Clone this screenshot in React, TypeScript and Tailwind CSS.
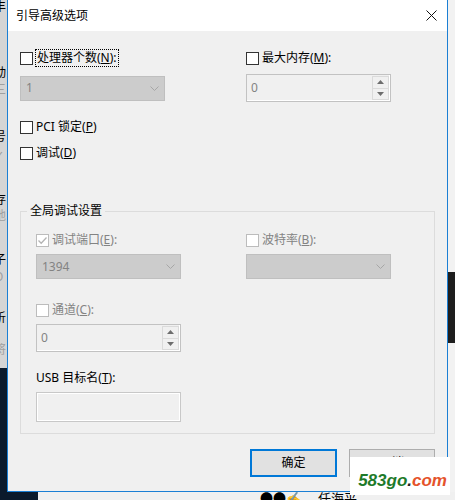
import React from "react";

const font = "font-['Noto_Sans','Noto_Sans_CJK_SC',sans-serif]";

function Box({ checked, disabled }: { checked?: boolean; disabled?: boolean }) {
  return (
    <span
      className={
        disabled
          ? "w-[13px] h-[13px] shrink-0 border border-[#bcbcbc] bg-white flex items-center justify-center"
          : "w-[13px] h-[13px] shrink-0 border border-[#333333] bg-white flex items-center justify-center"
      }
    >
      {checked && (
        <svg width="11" height="11" viewBox="0 0 11 11">
          <path d="M1.5 5.5 L4.2 8.3 L9.5 2.5" fill="none" stroke="#b4b4b4" strokeWidth="1.3" />
        </svg>
      )}
    </span>
  );
}

function Chevron() {
  return (
    <svg width="9" height="5" viewBox="0 0 9 5">
      <path d="M0.5 0.5 L4.5 4.5 L8.5 0.5" fill="none" stroke="#a6a6a6" strokeWidth="1" />
    </svg>
  );
}

function Combo({ value }: { value?: string }) {
  return (
    <div className="w-[145px] h-[25px] border border-[#bfbfbf] bg-[#cccccc] flex items-center justify-between pl-[5px] pr-[5px] text-[12px] text-[#838383]">
      <span>{value}</span>
      <Chevron />
    </div>
  );
}

function Spin({ value }: { value: string }) {
  return (
    <div className="w-[145px] h-[28px] border border-[#c2c2c2] bg-[#f0f0f0] flex shadow-[inset_-1px_-1px_0_#ffffff]">
      <div className="flex-1 flex items-center pl-[4px] text-[12px] text-[#838383]">{value}</div>
      <div className="w-[17px] my-[1px] mr-[1px] flex flex-col">
        <div className="flex-1 border border-[#dadada] flex items-center justify-center">
          <svg width="7" height="4" viewBox="0 0 7 4">
            <path d="M0 4 L3.5 0 L7 4 Z" fill="#6d6d6d" />
          </svg>
        </div>
        <div className="flex-1 border border-t-0 border-[#dadada] flex items-center justify-center">
          <svg width="7" height="4" viewBox="0 0 7 4">
            <path d="M0 0 L3.5 4 L7 0 Z" fill="#6d6d6d" />
          </svg>
        </div>
      </div>
    </div>
  );
}

function Check({
  children,
  checked,
  disabled,
  focus,
}: {
  children: React.ReactNode;
  checked?: boolean;
  disabled?: boolean;
  focus?: boolean;
}) {
  return (
    <div className="h-[18px] flex items-center">
      <Box checked={checked} disabled={disabled} />
      {focus ? (
        <span className="ml-[2px] px-[1px] h-[18px] leading-[16px] border border-dotted border-black text-[12px] text-black">
          {children}
        </span>
      ) : (
        <span className={disabled ? "ml-[3px] text-[12px] text-[#838383]" : "ml-[3px] text-[12px] text-black"}>
          {children}
        </span>
      )}
    </div>
  );
}

export default function App() {
  return (
    <div className={`w-[455px] h-[500px] overflow-hidden flex flex-col bg-[#f0f0f0] ${font}`}>
      <div className="h-[492px] flex">
        {/* window behind, left edge */}
        <div className="w-[7px] flex flex-col overflow-hidden bg-[#d5d5d5] text-[12px] leading-[12px]">
          <span className="-ml-[6px] mt-[1px] text-black">丰</span>
          <span className="-ml-[6px] mt-[54px] text-black">动</span>
          <span className="-ml-[6px] mt-[5px] text-[#a0a0a0]">三</span>
          <span className="-ml-[6px] mt-[35px] text-black">号</span>
          <span className="-ml-[6px] mt-[8px] text-[#a0a0a0]">✓</span>
          <span className="-ml-[6px] mt-[31px] text-black">存</span>
          <span className="-ml-[6px] mt-[4px] text-[#a0a0a0]">地</span>
          <span className="-ml-[6px] mt-[32px] text-black">子</span>
          <span className="-ml-[6px] mt-[5px] text-[#a0a0a0]">O</span>
          <span className="-ml-[6px] mt-[29px] text-black">析</span>
          <span className="-ml-[6px] mt-[20px] text-[#a0a0a0]">将</span>
          <div className="mt-[12px] flex-1 bg-[#0b1a2c]" />
        </div>

        {/* dialog */}
        <div className="w-[441px] flex flex-col border-x border-b border-[#1b7fd4]">
          <div className="h-[31px] bg-white flex items-center justify-between pl-[8px] pr-[10px]">
            <span className="text-[12px] text-black">引导高级选项</span>
            <svg width="11" height="11" viewBox="0 0 11 11">
              <path d="M0.5 0.5 L10.5 10.5 M10.5 0.5 L0.5 10.5" stroke="#111111" strokeWidth="1" />
            </svg>
          </div>

          <div className="flex-1 bg-[#f0f0f0] pl-[12px] pr-[12px] flex flex-col">
            <div className="mt-[18px] flex">
              <div className="w-[226px]">
                <Check focus>
                  处理器个数(<u>N</u>):
                </Check>
              </div>
              <Check>
                最大内存(<u>M</u>):
              </Check>
            </div>

            <div className="mt-[7px] flex items-center">
              <div className="w-[226px]">
                <Combo value="1" />
              </div>
              <Spin value="0" />
            </div>

            <div className="mt-[16px]">
              <Check>
                PCI 锁定(<u>P</u>)
              </Check>
            </div>
            <div className="mt-[8px]">
              <Check>
                调试(<u>D</u>)
              </Check>
            </div>

            <fieldset className="mt-[40px] w-[415px] border border-[#dcdcdc] pl-[15px] pb-[11px]">
              <legend className="-ml-[9px] px-[3px] h-[18px] leading-[18px] text-[12px] text-black">全局调试设置</legend>
              <div className="mt-[11px] flex">
                <div className="w-[210px]">
                  <Check checked disabled>
                    调试端口(<u>E</u>):
                  </Check>
                </div>
                <Check disabled>
                  波特率(<u>B</u>):
                </Check>
              </div>
              <div className="mt-[5px] flex">
                <div className="w-[210px]">
                  <Combo value="1394" />
                </div>
                <Combo />
              </div>
              <div className="mt-[22px]">
                <Check disabled>
                  通道(<u>C</u>):
                </Check>
              </div>
              <div className="mt-[5px]">
                <Spin value="0" />
              </div>
              <div className="mt-[17px] h-[18px] flex items-center text-[12px] text-black">
                USB 目标名(<u>T</u>):
              </div>
              <div className="mt-[5px] w-[145px] h-[30px] border border-[#c8c8c8] bg-[#f0f0f0] shadow-[inset_0_0_0_1px_#ffffff]" />
            </fieldset>

            <div className="mt-[15px] flex justify-end gap-[12px]">
              <button className="w-[87px] h-[28px] border-2 border-[#0078d7] bg-[#e1e1e1] text-[12px] text-black">
                确定
              </button>
              <button className="w-[86px] h-[28px] border border-[#adadad] bg-[#e1e1e1] text-[12px] text-black">
                取消
              </button>
            </div>
          </div>
        </div>

        {/* window behind, right edge */}
        <div className="w-[7px] flex flex-col bg-[#f2f2f2]">
          <div className="h-[272px]" />
          <div className="h-[71px] bg-[#1e1e1e]" />
          <div className="flex-1" />
        </div>
      </div>

      <div className="h-[8px] flex overflow-hidden">
        <div className="w-[38px] bg-[#0b1a2c]" />
        <div className="flex-1 bg-[#f0f0f0] flex">
          <span className="ml-[222px] -mt-[2px] text-[13px] leading-[16px] text-black">●●✍</span>
          <span className="ml-[16px] -mt-[2px] text-[13px] leading-[16px] text-black">任海平</span>
        </div>
      </div>

      {/* watermark */}
      <div className="absolute left-[350px] top-[457px] w-[100px] h-[38px] bg-white flex items-end justify-end pr-[3px] pb-[4px]">
        <span className="italic font-semibold text-[17px] leading-[20px] font-['Liberation_Sans',sans-serif]">
          <span className="text-[#1e7a2a]">583go</span>
          <span className="text-[#222222]">.</span>
          <span className="text-[#e5532b]">com</span>
        </span>
      </div>
    </div>
  );
}
